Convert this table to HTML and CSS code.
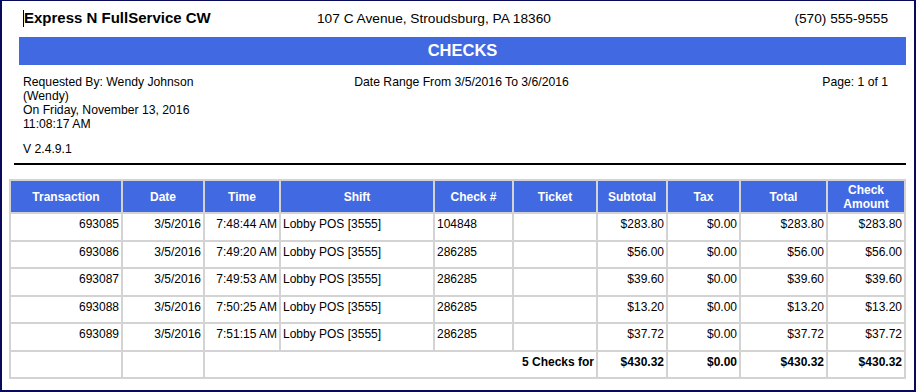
FILE: index.html
```html
<!DOCTYPE html>
<html lang="en">
<head>
<meta charset="utf-8">
<title>Checks</title>
<link rel="stylesheet" href="styles.css">
</head>
<body>
<div class="frame">
  <div class="top">
    <div class="title"><span class="caret"></span>Express N FullService CW</div>
    <div class="addr">107 C Avenue, Stroudsburg, PA 18360</div>
    <div class="phone">(570) 555-9555</div>
  </div>
  <div class="banner">CHECKS</div>
  <div class="info">
    <div class="req">
      <div class="line-block">Requested By: Wendy Johnson (Wendy)</div>
      <div class="line-block">On Friday, November 13, 2016 11:08:17 AM</div>
      <div class="ver">V 2.4.9.1</div>
    </div>
    <div class="range">Date Range From 3/5/2016 To 3/6/2016</div>
    <div class="page">Page: 1 of 1</div>
  </div>
  <div class="rule"></div>
  <table class="grid">
    <colgroup>
      <col class="c-trans"><col class="c-date"><col class="c-time"><col class="c-shift"><col class="c-check">
      <col class="c-ticket"><col class="c-sub"><col class="c-tax"><col class="c-total"><col class="c-amt">
    </colgroup>
    <thead>
      <tr>
        <th>Transaction</th><th>Date</th><th>Time</th><th>Shift</th><th>Check #</th>
        <th>Ticket</th><th>Subtotal</th><th>Tax</th><th>Total</th><th>Check<br>Amount</th>
      </tr>
    </thead>
    <tbody>
      <tr><td class="r">693085</td><td class="r">3/5/2016</td><td class="r">7:48:44 AM</td><td>Lobby POS [3555]</td><td>104848</td><td></td><td class="r">$283.80</td><td class="r">$0.00</td><td class="r">$283.80</td><td class="r">$283.80</td></tr>
      <tr><td class="r">693086</td><td class="r">3/5/2016</td><td class="r">7:49:20 AM</td><td>Lobby POS [3555]</td><td>286285</td><td></td><td class="r">$56.00</td><td class="r">$0.00</td><td class="r">$56.00</td><td class="r">$56.00</td></tr>
      <tr><td class="r">693087</td><td class="r">3/5/2016</td><td class="r">7:49:53 AM</td><td>Lobby POS [3555]</td><td>286285</td><td></td><td class="r">$39.60</td><td class="r">$0.00</td><td class="r">$39.60</td><td class="r">$39.60</td></tr>
      <tr><td class="r">693088</td><td class="r">3/5/2016</td><td class="r">7:50:25 AM</td><td>Lobby POS [3555]</td><td>286285</td><td></td><td class="r">$13.20</td><td class="r">$0.00</td><td class="r">$13.20</td><td class="r">$13.20</td></tr>
      <tr><td class="r">693089</td><td class="r">3/5/2016</td><td class="r">7:51:15 AM</td><td>Lobby POS [3555]</td><td>286285</td><td></td><td class="r">$37.72</td><td class="r">$0.00</td><td class="r">$37.72</td><td class="r">$37.72</td></tr>
      <tr class="sum"><td></td><td></td><td class="r" colspan="4">5 Checks for</td><td class="r">$430.32</td><td class="r">$0.00</td><td class="r">$430.32</td><td class="r">$430.32</td></tr>
    </tbody>
  </table>
</div>
</body>
</html>
```
FILE: styles.css
```css
html, body {
  margin: 0;
  padding: 0;
  background: #fff;
}
body {
  font-family: "Liberation Sans", Arial, sans-serif;
  color: #000;
}
.frame {
  box-sizing: border-box;
  width: 916px;
  height: 392px;
  border-style: solid;
  border-color: #0a0a5c;
  border-width: 1px 2px 2px 2px;
  overflow: hidden;
}
.top {
  box-sizing: border-box;
  height: 36px;
  padding: 8px 26px 0 21px;
  display: grid;
  grid-template-columns: 294px 1fr auto;
  align-items: baseline;
  line-height: 18px;
}
.title {
  font-size: 15px;
  font-weight: bold;
  display: flex;
  align-items: baseline;
}
.caret {
  display: inline-block;
  width: 1px;
  height: 17px;
  background: #000;
  align-self: center;
}
.addr {
  font-size: 13.7px;
}
.phone {
  font-size: 13.7px;
  text-align: right;
}
.banner {
  box-sizing: border-box;
  height: 28px;
  margin: 0 8px 0 17px;
  background: #4169e1;
  color: #fff;
  font-weight: bold;
  font-size: 16.5px;
  line-height: 26px;
  text-align: center;
}
.info {
  display: grid;
  grid-template-columns: 306px 1fr 294px;
  padding: 10px 26px 0 21px;
  font-size: 12.2px;
  line-height: 14px;
}
.req {
  width: 178px;
}
.ver {
  margin-top: 11px;
}
.range {
  text-align: center;
}
.page {
  text-align: right;
}
.rule {
  height: 2px;
  background: #000;
  margin: 7px 8px 0 12px;
}
.grid {
  margin: 14px 0 0 7px;
  width: 897px;
  table-layout: fixed;
  border-collapse: collapse;
  font-size: 12px;
  line-height: 14px;
}
.c-trans { width: 112px; }
.c-date { width: 82px; }
.c-time { width: 76px; }
.c-shift { width: 154px; }
.c-check { width: 79px; }
.c-ticket { width: 84px; }
.c-sub { width: 70px; }
.c-tax { width: 73px; }
.c-total { width: 87px; }
.c-amt { width: 78px; }
.grid th, .grid td {
  border: 2px solid #d3d3d3;
}
.grid th {
  background: #4169e1;
  color: #fff;
  font-weight: bold;
  height: 31px;
  padding: 0 2px;
  text-align: center;
  vertical-align: middle;
}
.grid td {
  height: 27.5px;
  box-sizing: border-box;
  padding: 3px 2px 0 2px;
  vertical-align: top;
  white-space: nowrap;
}
.grid td.r {
  text-align: right;
}
.grid .sum td {
  font-weight: bold;
}
```
